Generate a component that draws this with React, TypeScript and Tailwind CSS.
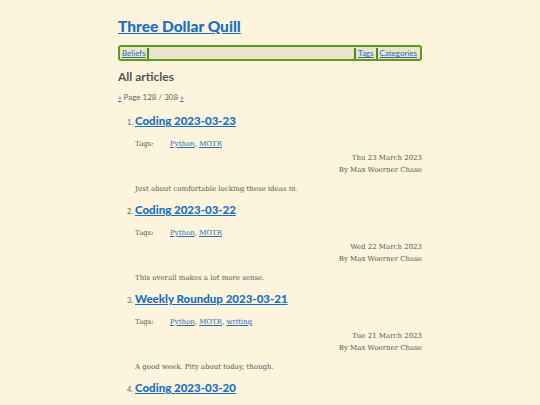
const articles = [
  {
    title: "Coding 2023-03-23",
    tags: ["Python", "MOTR"],
    date: "Thu 23 March 2023",
    summary: "Just about comfortable locking these ideas in.",
  },
  {
    title: "Coding 2023-03-22",
    tags: ["Python", "MOTR"],
    date: "Wed 22 March 2023",
    summary: "This overall makes a lot more sense.",
  },
  {
    title: "Weekly Roundup 2023-03-21",
    tags: ["Python", "MOTR", "writing"],
    date: "Tue 21 March 2023",
    summary: "A good week. Pity about today, though.",
  },
  {
    title: "Coding 2023-03-20",
    tags: ["Python", "MOTR"],
    date: "Mon 20 March 2023",
    summary: "",
  },
];

const sans = "font-['Lato','Open_Sans',sans-serif]";
const serif = "font-['DejaVu_Serif','Liberation_Serif',serif]";

export default function App() {
  return (
    <div className="h-[405px] w-full overflow-hidden bg-[#fcf4dc]">
      <div className="mx-auto w-[304px] pt-[15px]">
        <h1 className={`${sans} text-[15.5px] font-black leading-[22px] text-[#1a6fc2]`}>
          <a href="#" className="underline">
            Three Dollar Quill
          </a>
        </h1>

        <nav className={`${sans} mt-[8px] flex h-[16px] items-center rounded-[3px] border-2 border-[#5e9a1e] bg-[#ebe4cc] px-[1px] text-[8px] text-[#2a6db3]`}>
          <a href="#" className="px-[1px] underline">Beliefs</a>
          <span className="h-[11px] w-[2px] bg-[#4d8a16]" />
          <span className="flex-1" />
          <span className="h-[11px] w-[2px] bg-[#4d8a16]" />
          <a href="#" className="px-[2px] underline">Tags</a>
          <span className="h-[11px] w-[2px] bg-[#4d8a16]" />
          <a href="#" className="px-[2px] underline">Categories</a>
        </nav>

        <h2 className={`${sans} mt-[8px] text-[12px] font-bold leading-[16px] text-[#555]`}>
          All articles
        </h2>

        <p className={`${sans} mt-[7px] text-[8px] leading-[10px] text-[#666]`}>
          <a href="#" className="text-[#2a6db3] underline">«</a> Page 128 / 308{" "}
          <a href="#" className="text-[#2a6db3] underline">»</a>
        </p>

        <ol className="mt-[10px]">
          {articles.map((a, i) => (
            <li key={i} className="h-[89px]">
              <div className="flex items-baseline">
                <span className={`${sans} w-[17px] pl-[9px] text-[7.5px] text-[#666]`}>
                  {i + 1}.
                </span>
                <a href="#" className={`${sans} text-[11.5px] font-black leading-[18px] text-[#1a6fc2] underline`}>
                  {a.title}
                </a>
              </div>
              <div className={`${serif} pl-[17px] text-[7px] text-[#555]`}>
                <div className="mt-[9px] flex leading-[10px]">
                  <span className="w-[35px]">Tags:</span>
                  <span>
                    {a.tags.map((t, j) => (
                      <span key={t}>
                        <a href="#" className="text-[#2a6db3] underline">{t}</a>
                        {j < a.tags.length - 1 ? ", " : ""}
                      </span>
                    ))}
                  </span>
                </div>
                <div className="mt-[3px] text-right leading-[12px]">
                  <div>{a.date}</div>
                  <div>By Max Woerner Chase</div>
                </div>
                <p className="mt-[8px] leading-[10px]">{a.summary}</p>
              </div>
            </li>
          ))}
        </ol>
      </div>
    </div>
  );
}
